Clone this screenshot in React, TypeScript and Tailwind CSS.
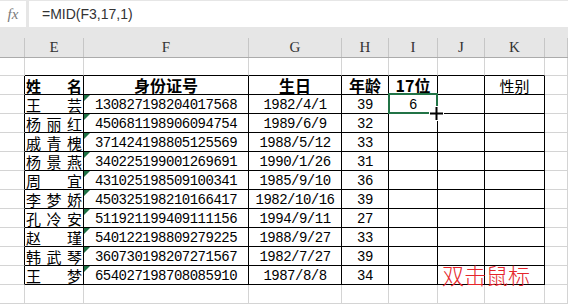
import * as React from "react";

const COLS = ["D", "E", "F", "G", "H", "I", "J", "K", "L"];
const COL_W = ["w-[25px]", "w-[59px]", "w-[165px]", "w-[93px]", "w-[47px]", "w-[49px]", "w-[47px]", "w-[60px]", "flex-1"];

const PEOPLE: [string, string, string, string][] = [
  ["王芸", "130827198204017568", "1982/4/1", "39"],
  ["杨丽红", "450681198906094754", "1989/6/9", "32"],
  ["戚青槐", "371424198805125569", "1988/5/12", "33"],
  ["杨景燕", "340225199001269691", "1990/1/26", "31"],
  ["周宜", "431025198509100341", "1985/9/10", "36"],
  ["李梦娇", "450325198210166417", "1982/10/16", "39"],
  ["孔冷安", "511921199409111156", "1994/9/11", "27"],
  ["赵瑾", "540122198809279225", "1988/9/27", "33"],
  ["韩武琴", "360730198207271567", "1982/7/27", "39"],
  ["王梦", "654027198708085910", "1987/8/8", "34"],
];

const CJK = "font-['Noto_Sans_CJK_SC',sans-serif]";
const MONO = "font-['Liberation_Mono','Noto_Sans_CJK_SC',monospace] text-[14px] tracking-[-0.5px]";

// distributed alignment like Excel's 分散对齐
function Name({ text, bold }: { text: string; bold?: boolean }) {
  return (
    <div className={`flex w-full justify-between px-[1px] text-[15px] leading-none ${CJK} ${bold ? "font-bold" : ""}`}>
      {text.split("").map((ch, i) => (
        <span key={i}>{ch}</span>
      ))}
    </div>
  );
}

function Triangle() {
  return (
    <svg className="absolute left-0 top-0" width="6" height="6" viewBox="0 0 6 6">
      <polygon points="0,0 6,0 0,6" fill="#1e7145" />
    </svg>
  );
}

type Row = { h: string; cells: React.ReactNode[]; table: boolean; topEdge?: boolean; flag?: boolean };

function SheetRow({ row }: { row: Row }) {
  return (
    <div className={`flex ${row.h}`}>
      {COLS.map((_, c) => {
        const inTable = c >= 1 && c <= 7;
        const right = row.table && c <= 7 ? "border-r-black" : "border-r-[#d4d4d4]";
        const bottom = inTable && (row.table || row.topEdge) ? "border-b-black" : "border-b-[#d4d4d4]";
        return (
          <div
            key={c}
            className={`relative flex shrink-0 items-end justify-center overflow-visible border-b border-r pb-[1px] text-black ${COL_W[c]} ${right} ${bottom}`}
          >
            {row.flag && c === 2 && <Triangle />}
            {row.cells[c]}
          </div>
        );
      })}
    </div>
  );
}

export default function App() {
  const rows: Row[] = [
    { h: "h-[18px]", cells: [], table: false, topEdge: true },
    {
      h: "h-[19px]",
      table: true,
      cells: [
        null,
        <Name text="姓名" bold />,
        <span className={`text-[16px] font-bold leading-none ${CJK}`}>身份证号</span>,
        <span className={`text-[16px] font-bold leading-none ${CJK}`}>生日</span>,
        <span className={`text-[16px] font-bold leading-none ${CJK}`}>年龄</span>,
        <span className={`text-[16px] font-bold leading-none ${CJK}`}>17位</span>,
        null,
        <span className={`text-[15px] leading-none ${CJK}`}>性别</span>,
      ],
    },
    ...PEOPLE.map(([name, id, birth, age], i) => ({
      h: "h-[19px]",
      table: true,
      flag: true,
      cells: [
        null,
        <Name text={name} />,
        <span className={`leading-none ${MONO}`}>{id}</span>,
        <span className={`leading-none ${MONO}`}>{birth}</span>,
        <span className={`leading-none ${MONO}`}>{age}</span>,
        i === 0 ? <span className={`leading-none ${MONO}`}>6</span> : null,
      ],
    })),
    { h: "h-[19px]", cells: [], table: false },
  ];

  return (
    <div className="relative h-[305px] w-[568px] overflow-hidden bg-white">
      {/* Formula bar */}
      <div className="flex h-[28px] bg-[#e6e6e6] pt-px">
        <div className="flex h-[26px] w-[26px] items-center justify-center bg-white font-['Liberation_Serif',serif] text-[15px] italic text-[#7a7a7a]">
          fx
        </div>
        <div className="ml-[3px] flex h-[26px] flex-1 items-center bg-white pl-[13px] font-['Liberation_Sans',sans-serif] text-[14px] text-[#333]">
          =MID(F3,17,1)
        </div>
      </div>
      <div className="h-[10px] bg-[#e6e6e6]" />

      {/* Column headers */}
      <div className="flex h-[20px] border-b border-[#ababab] bg-[#e6e6e6]">
        {COLS.map((c, i) => (
          <div
            key={c}
            className={`flex shrink-0 items-center justify-center border-r border-[#c6c6c6] font-['Liberation_Serif',serif] text-[15px] text-[#333] ${COL_W[i]}`}
          >
            {i === 0 || i === 8 ? "" : c}
          </div>
        ))}
      </div>

      {rows.map((r, i) => (
        <SheetRow key={i} row={r} />
      ))}

      {/* active cell I3 */}
      <div className="absolute left-[388px] top-[93px] h-[21px] w-[50px] border-2 border-[#217346]" />
      <svg className="absolute left-[429px] top-[106px]" width="15" height="15" viewBox="0 0 15 15">
        <path d="M6 0h3v6h6v3H9v6H6V9H0V6h6z" fill="#fff" />
        <path d="M6.5 1h2v5.5H14v2H8.5V14h-2V8.5H1v-2h5.5z" fill="#000" />
      </svg>

      <div className={`absolute left-[442px] top-[263px] text-[22px] font-light leading-none text-[#e5252b] ${CJK}`}>
        双击鼠标
      </div>
    </div>
  );
}
